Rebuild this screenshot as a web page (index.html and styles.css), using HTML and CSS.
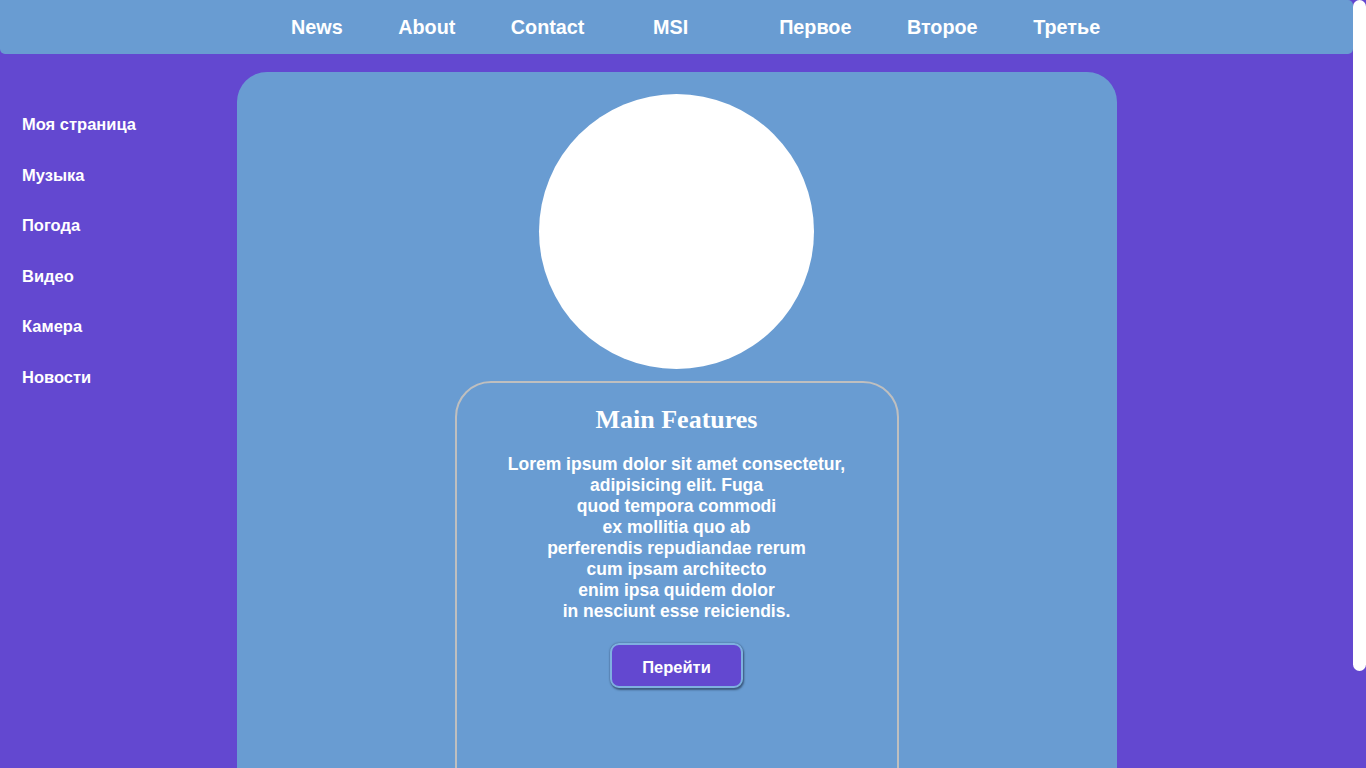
FILE: index.html
```html
<!DOCTYPE html>
<html lang="ru">
<head>
<meta charset="utf-8">
<title>MSI</title>
<link rel="stylesheet" href="styles.css">
</head>
<body>
<header class="topbar">
  <nav class="topnav">
    <a class="topnav__link" href="#">News</a>
    <a class="topnav__link" href="#">About</a>
    <a class="topnav__link" href="#">Contact</a>
    <a class="topnav__link topnav__logo" href="#">MSI</a>
    <a class="topnav__link" href="#">Первое</a>
    <a class="topnav__link" href="#">Второе</a>
    <a class="topnav__link" href="#">Третье</a>
  </nav>
</header>
<div class="layout">
  <aside class="sidebar">
    <a class="sidebar__link" href="#">Моя страница</a>
    <a class="sidebar__link" href="#">Музыка</a>
    <a class="sidebar__link" href="#">Погода</a>
    <a class="sidebar__link" href="#">Видео</a>
    <a class="sidebar__link" href="#">Камера</a>
    <a class="sidebar__link" href="#">Новости</a>
  </aside>
  <main class="card">
    <div class="avatar"></div>
    <section class="features">
      <h2 class="features__title">Main Features</h2>
      <p class="features__text">Lorem ipsum dolor sit amet consectetur,<br>adipisicing elit. Fuga<br>quod tempora commodi<br>ex mollitia quo ab<br>perferendis repudiandae rerum<br>cum ipsam architecto<br>enim ipsa quidem dolor<br>in nesciunt esse reiciendis.</p>
      <button class="features__btn" type="button">Перейти</button>
    </section>
  </main>
</div>
<div class="scrollbar"><div class="scrollbar__thumb"></div></div>
</body>
</html>
```
FILE: styles.css
```css
html {
  background: #6348d0;
}
body {
  margin: 0 13px 0 0;
  background: #6348d0;
  font-family: "Liberation Sans", Arial, sans-serif;
  color: #ffffff;
}
a {
  color: #ffffff;
  text-decoration: none;
}
.scrollbar {
  position: fixed;
  top: 0;
  right: 0;
  width: 13px;
  height: 100%;
  background: #6348d0;
}
.scrollbar__thumb {
  height: 671px;
  background: #ffffff;
  border-radius: 7px;
}
.topbar {
  background: #699cd2;
  height: 54px;
  border-radius: 0 5px 5px 5px;
}
.topnav {
  display: flex;
  align-items: center;
  height: 100%;
  padding-left: 291px;
}
.topnav__link {
  font-weight: bold;
  font-size: 19.8px;
  margin-right: 55.5px;
}
.topnav__logo {
  margin-left: 13px;
  margin-right: 91px;
}
.layout {
  display: flex;
  align-items: flex-start;
}
.sidebar {
  width: 237px;
  flex: none;
  display: flex;
  flex-direction: column;
  padding: 61px 0 0 22px;
  box-sizing: border-box;
  gap: 31.6px;
}
.sidebar__link {
  font-size: 16.5px;
  font-weight: bold;
  line-height: 19px;
}
.card {
  width: 880px;
  flex: none;
  margin-top: 18px;
  background: #699cd2;
  border-radius: 30px;
  display: flex;
  flex-direction: column;
  align-items: center;
  padding: 22px 1px 20px 0;
  box-sizing: border-box;
}
.avatar {
  width: 275px;
  height: 275px;
  border-radius: 50%;
  background: #ffffff;
}
.features {
  margin-top: 12px;
  width: 444px;
  height: 480px;
  box-sizing: border-box;
  border: 2px solid #bfbfbf;
  border-radius: 36px;
  display: flex;
  flex-direction: column;
  align-items: center;
  text-align: center;
}
.features__title {
  margin: 22px 0 0;
  font-family: "Liberation Serif", "Times New Roman", serif;
  font-size: 26px;
  line-height: 30px;
  font-weight: bold;
}
.features__text {
  margin: 19px 0 0;
  font-size: 17.5px;
  line-height: 21px;
  font-weight: bold;
}
.features__btn {
  margin-top: 21px;
  width: 133px;
  height: 45px;
  padding: 4px 0 0;
  background: #6348d0;
  color: #ffffff;
  font-family: "Liberation Sans", Arial, sans-serif;
  font-size: 16.5px;
  font-weight: bold;
  border: 2px solid #7fb0e0;
  border-radius: 9px;
  box-shadow: 1px 2px 2px #3b5a7e, 0 0 2px #3b5a7e;
}
```
